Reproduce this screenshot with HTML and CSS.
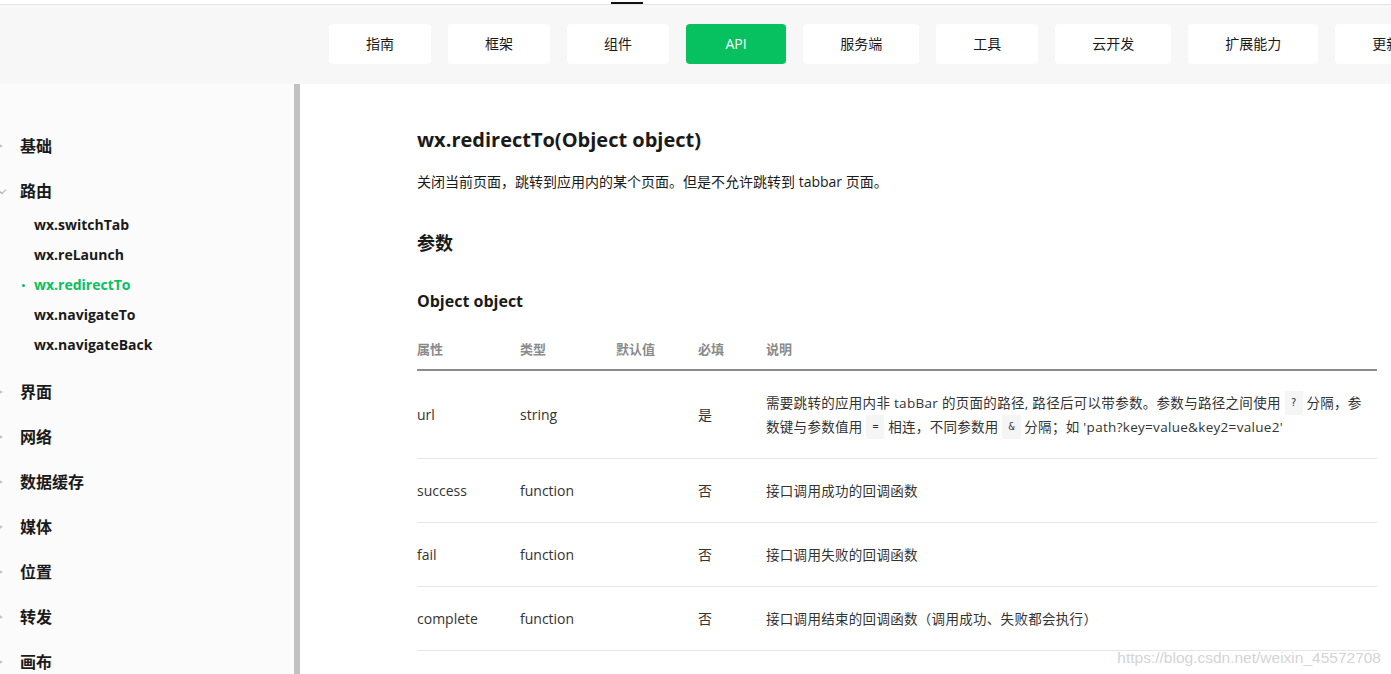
FILE: index.html
```html
<!DOCTYPE html>
<html lang="zh-CN">
<head>
<meta charset="utf-8">
<title>wx.redirectTo</title>
<link rel="stylesheet" href="styles.css">
</head>
<body>
<div class="topstrip"><span class="topstrip-mark"></span></div>
<header class="subnav">
  <a class="navbtn">指南</a>
  <a class="navbtn">框架</a>
  <a class="navbtn">组件</a>
  <a class="navbtn navbtn-active">API</a>
  <a class="navbtn">服务端</a>
  <a class="navbtn">工具</a>
  <a class="navbtn">云开发</a>
  <a class="navbtn">扩展能力</a>
  <a class="navbtn">更新日志</a>
</header>
<div class="layout">
  <aside class="sidebar">
    <ul class="cats">
      <li class="cat"><span class="arrow"></span>基础</li>
      <li class="cat cat-open"><span class="arrow arrow-down"></span>路由</li>
      <li>
        <ul class="subs">
          <li class="sub">wx.switchTab</li>
          <li class="sub">wx.reLaunch</li>
          <li class="sub sub-active">wx.redirectTo</li>
          <li class="sub">wx.navigateTo</li>
          <li class="sub">wx.navigateBack</li>
        </ul>
      </li>
      <li class="cat"><span class="arrow"></span>界面</li>
      <li class="cat"><span class="arrow"></span>网络</li>
      <li class="cat"><span class="arrow"></span>数据缓存</li>
      <li class="cat"><span class="arrow"></span>媒体</li>
      <li class="cat"><span class="arrow"></span>位置</li>
      <li class="cat"><span class="arrow"></span>转发</li>
      <li class="cat"><span class="arrow"></span>画布</li>
      <li class="cat"><span class="arrow"></span>文件</li>
    </ul>
  </aside>
  <div class="scrollbar"></div>
  <main class="content">
    <h1 class="title">wx.redirectTo(Object object)</h1>
    <p class="desc">关闭当前页面，跳转到应用内的某个页面。但是不允许跳转到 tabbar 页面。</p>
    <h2 class="h2">参数</h2>
    <h3 class="h3">Object object</h3>
    <table class="params">
      <colgroup>
        <col class="c1"><col class="c2"><col class="c3"><col class="c4"><col class="c5">
      </colgroup>
      <thead>
        <tr><th>属性</th><th>类型</th><th>默认值</th><th>必填</th><th>说明</th></tr>
      </thead>
      <tbody>
        <tr>
          <td>url</td><td>string</td><td></td><td>是</td>
          <td class="d">需要跳转的应用内非 tabBar 的页面的路径, 路径后可以带参数。参数与路径之间使用 <code>?</code> 分隔，参数键与参数值用 <code>=</code> 相连，不同参数用 <code>&amp;</code> 分隔；如 'path?key=value&amp;key2=value2'</td>
        </tr>
        <tr><td>success</td><td>function</td><td></td><td>否</td><td class="d">接口调用成功的回调函数</td></tr>
        <tr><td>fail</td><td>function</td><td></td><td>否</td><td class="d">接口调用失败的回调函数</td></tr>
        <tr><td>complete</td><td>function</td><td></td><td>否</td><td class="d">接口调用结束的回调函数（调用成功、失败都会执行）</td></tr>
      </tbody>
    </table>
  </main>
</div>
<div class="watermark">https://blog.csdn.net/weixin_45572708</div>
</body>
</html>
```

FILE: styles.css
```css
html, body {
  margin: 0;
  padding: 0;
  height: 674px;
  overflow: hidden;
  background: #fff;
  font-family: "Open Sans", "Noto Sans CJK SC", sans-serif;
  color: #1a1a1a;
}

ul { list-style: none; margin: 0; padding: 0; }

.topstrip {
  height: 4px;
  border-bottom: 1px solid #e6e6e6;
  padding-left: 611px;
  box-sizing: content-box;
  display: flex;
}
.topstrip-mark {
  width: 32px;
  height: 2px;
  margin-top: 2px;
  background: #111;
}

.subnav {
  height: 79px;
  background: #f7f7f7;
  box-sizing: border-box;
  padding: 19px 0 0 329px;
  display: flex;
  gap: 17px;
  overflow: hidden;
  white-space: nowrap;
}
.navbtn {
  flex: none;
  height: 40px;
  line-height: 40px;
  padding: 0 37px;
  background: #fff;
  border-radius: 4px;
  font-size: 14px;
  color: #1a1a1a;
  text-align: center;
}
.navbtn-active {
  background: #07c160;
  color: #fff;
  padding: 0 39.5px;
}

.layout {
  display: flex;
  height: 590px;
}
.sidebar {
  width: 294px;
  flex: none;
  background: #fbfbfb;
  padding-top: 40px;
  box-sizing: border-box;
  overflow: hidden;
}
.scrollbar {
  width: 6px;
  flex: none;
  background: #c1c1c1;
}
.cat {
  position: relative;
  height: 45px;
  line-height: 45px;
  padding-left: 20px;
  font-size: 16px;
  font-weight: 700;
  color: #1a1a1a;
}
.arrow {
  position: absolute;
  left: -2px;
  top: 19px;
  width: 0;
  height: 0;
  border-left: 5px solid #c4c4c4;
  border-top: 3.5px solid transparent;
  border-bottom: 3.5px solid transparent;
}
.arrow-down {
  left: -1px;
  top: 18px;
  width: 5px;
  height: 5px;
  border: none;
  border-right: 1.5px solid #b0b0b0;
  border-bottom: 1.5px solid #b0b0b0;
  transform: rotate(45deg);
}
.subs {
  margin: -4px 0 10px;
}
.sub {
  position: relative;
  height: 30px;
  line-height: 30px;
  padding-left: 34px;
  font-size: 14px;
  font-weight: 700;
  color: #1a1a1a;
}
.sub-active {
  color: #07c160;
}
.sub-active::before {
  content: "";
  position: absolute;
  left: 22px;
  top: 14px;
  width: 3px;
  height: 3px;
  border-radius: 50%;
  background: #07c160;
}

.content {
  flex: 1;
  padding: 38px 14px 0 117px;
  min-width: 0;
}
.title {
  margin: 0;
  font-size: 20px;
  font-weight: 700;
  line-height: 36px;
  color: #1a1a1a;
}
.desc {
  margin: 13px 0 0;
  font-size: 14px;
  line-height: 22px;
  color: #1a1a1a;
}
.h2 {
  margin: 38px 0 0;
  font-size: 18px;
  font-weight: 700;
  line-height: 24px;
}
.h3 {
  margin: 34px 0 0;
  font-size: 16px;
  font-weight: 700;
  line-height: 24px;
}

.params {
  margin-top: 15px;
  width: 960px;
  border-collapse: collapse;
  table-layout: fixed;
  font-size: 14px;
}
.c1 { width: 103px; }
.c2 { width: 96px; }
.c3 { width: 82px; }
.c4 { width: 68px; }
.c5 { width: 611px; }
.params th {
  text-align: left;
  font-size: 13px;
  font-weight: 700;
  color: #8a8a8a;
  line-height: 22px;
  padding: 10px 0 9px;
  border-bottom: 2px solid #8c8c8c;
}
.params td {
  text-align: left;
  vertical-align: middle;
  line-height: 22px;
  padding: 19.5px 0;
  border-bottom: 1px solid #e6e6e6;
  color: #333;
}
.params td.d {
  font-size: 13.5px;
  line-height: 24px;
  padding-right: 6px;
  letter-spacing: 0.3px;
}
.params code {
  display: inline-block;
  background: #f5f5f5;
  padding: 0 6px;
  font-family: "DejaVu Sans Mono", monospace;
  font-size: 10px;
  line-height: 24px;
  color: #333;
  letter-spacing: 0;
  vertical-align: top;
}

.watermark {
  position: absolute;
  right: 10px;
  bottom: 7px;
  font-family: "Liberation Sans", Arial, sans-serif;
  font-size: 15.5px;
  color: rgba(200, 200, 200, 0.8);
}
```
